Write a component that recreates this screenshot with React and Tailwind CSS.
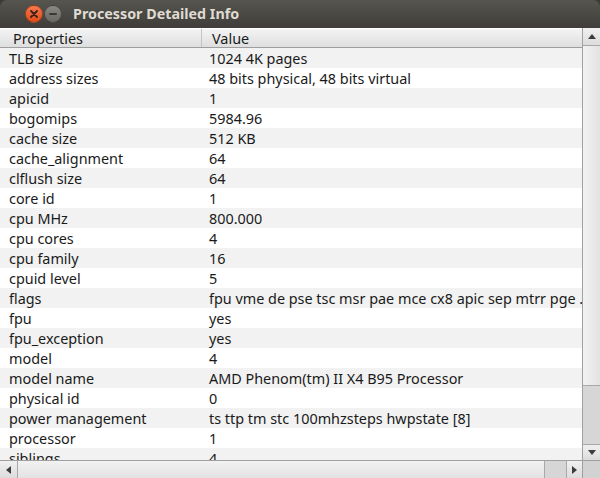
import React from "react";

const rows = [
  ["TLB size", "1024 4K pages"],
  ["address sizes", "48 bits physical, 48 bits virtual"],
  ["apicid", "1"],
  ["bogomips", "5984.96"],
  ["cache size", "512 KB"],
  ["cache_alignment", "64"],
  ["clflush size", "64"],
  ["core id", "1"],
  ["cpu MHz", "800.000"],
  ["cpu cores", "4"],
  ["cpu family", "16"],
  ["cpuid level", "5"],
  ["flags", "fpu vme de pse tsc msr pae mce cx8 apic sep mtrr pge ."],
  ["fpu", "yes"],
  ["fpu_exception", "yes"],
  ["model", "4"],
  ["model name", "AMD Phenom(tm) II X4 B95 Processor"],
  ["physical id", "0"],
  ["power management", "ts ttp tm stc 100mhzsteps hwpstate [8]"],
  ["processor", "1"],
  ["siblings", "4"],
  ["stepping", "2"],
];

export default function App() {
  return (
    <div
      className="w-[600px] h-[478px] flex flex-col bg-[#3c3b37] overflow-hidden"
      style={{ fontFamily: '"Noto Sans", "Open Sans", sans-serif' }}
    >
      {/* Title bar */}
      <div className="h-[28px] shrink-0 flex items-center rounded-t-[7px] bg-gradient-to-b from-[#57554f] to-[#3e3d39]">
        <div className="ml-[25px] w-[18px] h-[18px] rounded-full bg-gradient-to-b from-[#f7784a] to-[#df4a17] border border-[#3a1a0c]/40 flex items-center justify-center">
          <svg width="8" height="8" viewBox="0 0 8 8">
            <path d="M1 1 L7 7 M7 1 L1 7" stroke="#3b2016" strokeWidth="1.8" strokeLinecap="round" />
          </svg>
        </div>
        <div className="ml-[1px] w-[18px] h-[18px] rounded-full bg-gradient-to-b from-[#8a8882] to-[#6a6863] border border-[#2e2d2a]/60 flex items-center justify-center">
          <div className="w-[8px] h-[2px] bg-[#3a3935] rounded-full" />
        </div>
        <div className="ml-[11px] text-[14.3px] font-bold text-[#dfdbd2] leading-none">
          Processor Detailed Info
        </div>
      </div>

      {/* Content */}
      <div className="flex-1 flex flex-col bg-[#f2f1f0] min-h-0">
        <div className="flex flex-1 min-h-0">
          {/* Table */}
          <div className="flex-1 flex flex-col min-w-0 overflow-hidden">
            <div className="h-[20px] shrink-0 flex bg-gradient-to-b from-[#f4f4f4] to-[#dedede] border-t border-white border-b border-b-[#9e9e9e] text-[14.4px] text-[#1a1a1a] leading-none">
              <div className="w-[202px] shrink-0 pl-[13px] pt-[2px] flex items-center border-r border-[#c4c4c4]">
                Properties
              </div>
              <div className="flex-1 pl-[10px] pt-[2px] flex items-center">Value</div>
            </div>
            <div className="flex-1 overflow-hidden">
              {rows.map(([k, v], i) => (
                <div
                  key={k}
                  className={`h-[20px] pt-[2px] flex items-center text-[14.4px] text-[#1a1a1a] whitespace-nowrap ${
                    i % 2 === 0 ? "bg-[#f2f2f2]" : "bg-white"
                  }`}
                >
                  <div className="w-[200px] shrink-0 pl-[9px]">{k}</div>
                  <div className="pl-[9px]">{v}</div>
                </div>
              ))}
            </div>
          </div>
          {/* Vertical scrollbar */}
          <div className="w-[18px] shrink-0 flex flex-col border-l border-[#a0a0a0] bg-[#d6d6d6]">
            <div className="h-[18px] shrink-0 flex items-center justify-center bg-gradient-to-b from-[#f0f0f0] to-[#dcdcdc] border-b border-[#a8a8a8]">
              <svg width="8" height="5" viewBox="0 0 8 5">
                <path d="M0 5 L4 0 L8 5 Z" fill="#3c3c3c" />
              </svg>
            </div>
            <div className="flex-1 flex flex-col">
              <div className="h-[340px] bg-gradient-to-r from-[#f2f2f2] to-[#e2e2e2] border-b border-[#a8a8a8]" />
              <div className="flex-1" />
            </div>
            <div className="h-[16px] shrink-0 flex items-center justify-center bg-gradient-to-b from-[#f0f0f0] to-[#dcdcdc] border-t border-[#a8a8a8]">
              <svg width="8" height="5" viewBox="0 0 8 5">
                <path d="M0 0 L8 0 L4 5 Z" fill="#3c3c3c" />
              </svg>
            </div>
          </div>
        </div>
        {/* Horizontal scrollbar */}
        <div className="h-[18px] shrink-0 flex border-t border-[#a0a0a0]">
          <div className="flex-1 flex bg-[#d6d6d6]">
            <div className="w-[18px] shrink-0 flex items-center justify-center bg-gradient-to-b from-[#f0f0f0] to-[#dcdcdc] border-r border-[#a8a8a8]">
              <svg width="5" height="8" viewBox="0 0 5 8">
                <path d="M5 0 L0 4 L5 8 Z" fill="#3c3c3c" />
              </svg>
            </div>
            <div className="w-[527px] bg-gradient-to-b from-[#f2f2f2] to-[#e2e2e2] border-r border-[#a8a8a8]" />
            <div className="flex-1" />
            <div className="w-[16px] shrink-0 flex items-center justify-center bg-gradient-to-b from-[#f0f0f0] to-[#dcdcdc] border-l border-[#a8a8a8]">
              <svg width="5" height="8" viewBox="0 0 5 8">
                <path d="M0 0 L5 4 L0 8 Z" fill="#3c3c3c" />
              </svg>
            </div>
          </div>
          <div className="w-[18px] shrink-0 bg-[#d2d2d2] border-l border-[#a0a0a0]" />
        </div>
      </div>
    </div>
  );
}
